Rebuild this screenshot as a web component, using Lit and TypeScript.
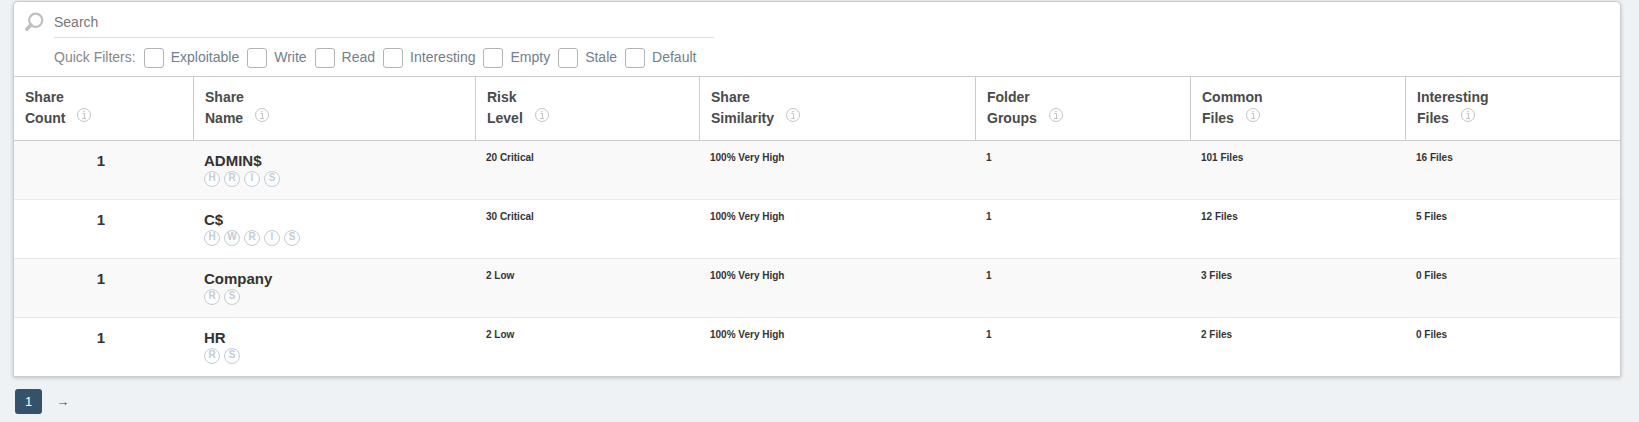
import { LitElement, html, css } from "lit";
import { customElement, property } from "lit/decorators.js";

interface Share {
  count: number;
  name: string;
  flags: string[];
  risk: string;
  similarity: string;
  groups: number;
  common: string;
  interesting: string;
}

const FILTERS = ["Exploitable", "Write", "Read", "Interesting", "Empty", "Stale", "Default"];

const COLUMNS = [
  { first: "Share", last: "Count", weight: 180 },
  { first: "Share", last: "Name", weight: 282 },
  { first: "Risk", last: "Level", weight: 224 },
  { first: "Share", last: "Similarity", weight: 276 },
  { first: "Folder", last: "Groups", weight: 215 },
  { first: "Common", last: "Files", weight: 215 },
  { first: "Interesting", last: "Files", weight: 214 },
];

const TOTAL_WEIGHT = COLUMNS.reduce((sum, column) => sum + column.weight, 0);

const SHARES: Share[] = [
  { count: 1, name: "ADMIN$", flags: ["H", "R", "I", "S"], risk: "20 Critical", similarity: "100% Very High", groups: 1, common: "101 Files", interesting: "16 Files" },
  { count: 1, name: "C$", flags: ["H", "W", "R", "I", "S"], risk: "30 Critical", similarity: "100% Very High", groups: 1, common: "12 Files", interesting: "5 Files" },
  { count: 1, name: "Company", flags: ["R", "S"], risk: "2 Low", similarity: "100% Very High", groups: 1, common: "3 Files", interesting: "0 Files" },
  { count: 1, name: "HR", flags: ["R", "S"], risk: "2 Low", similarity: "100% Very High", groups: 1, common: "2 Files", interesting: "0 Files" },
];

@customElement("share-toolbar")
export class ShareToolbar extends LitElement {
  static styles = css`
    :host {
      display: block;
      padding: 8px 10px;
      font-size: 14px;
    }
    .search {
      display: flex;
      align-items: flex-start;
      gap: 10px;
    }
    .glass {
      flex: none;
      width: 20px;
      height: 20px;
      margin-top: 2px;
    }
    .query {
      box-sizing: border-box;
      width: 660px;
      min-width: 0;
      height: 28px;
      padding: 0 0 3px;
      border: 0;
      border-bottom: 1px solid #dcdcdc;
      outline: 0;
      background: none;
      color: #444;
      font: inherit;
    }
    .query::placeholder {
      color: #777;
      opacity: 1;
    }
    .filters {
      display: flex;
      flex-wrap: wrap;
      align-items: flex-start;
      gap: 8px;
      margin: 10px 0 0 30px;
      color: #888;
      line-height: 18px;
    }
    .filter {
      display: flex;
      align-items: flex-start;
      gap: 7px;
      color: #708090;
      cursor: pointer;
    }
    .tick {
      appearance: none;
      box-sizing: border-box;
      width: 20px;
      height: 20px;
      margin: 0;
      border: 1px solid #b4b4b4;
      border-radius: 3px;
      background: #fff;
    }
    .tick:checked {
      background: #34536a;
    }
  `;

  render() {
    return html`
      <div class="search">
        <svg class="glass" viewBox="0 0 20 20" aria-hidden="true">
          <circle cx="11.7" cy="8.3" r="6.6" fill="none" stroke="#c0c0c0" stroke-width="2.2" />
          <path d="M7 13 L2.8 17.2" fill="none" stroke="#c0c0c0" stroke-width="3.6" stroke-linecap="round" />
        </svg>
        <input class="query" type="text" placeholder="Search" aria-label="Search" />
      </div>
      <div class="filters" role="group" aria-labelledby="filters-title">
        <span id="filters-title">Quick Filters:</span>
        ${FILTERS.map(
          (name) => html`<label class="filter"><input class="tick" type="checkbox" />${name}</label>`
        )}
      </div>
    `;
  }
}

@customElement("share-table")
export class ShareTable extends LitElement {
  @property({ attribute: false }) shares: Share[] = [];

  static styles = css`
    :host {
      display: block;
    }
    .table {
      width: 100%;
      table-layout: fixed;
      border-collapse: separate;
      border-spacing: 0;
    }
    .head {
      padding: 10px 10px 11px 11px;
      border-top: 1px solid #ccc;
      border-bottom: 1px solid #ccc;
      border-right: 1px solid #ccc;
      color: #4a4a4a;
      font-size: 14px;
      font-weight: bold;
      line-height: 21px;
      text-align: left;
      vertical-align: top;
    }
    .head:last-child {
      border-right: 0;
    }
    .caption {
      display: flex;
      gap: 12px;
    }
    .info {
      width: 14px;
      height: 14px;
    }
    .cell {
      height: 38px;
      padding: 10px 16px 10px 10px;
      border-bottom: 1px solid #ebebeb;
      color: #333;
      font-size: 10px;
      font-weight: bold;
      line-height: 14px;
      vertical-align: top;
    }
    .row:nth-child(odd) .cell {
      background: #f9f9f9;
    }
    .row:last-child .cell {
      border-bottom: 0;
    }
    .row .count {
      font-size: 15px;
      line-height: 20px;
      text-align: center;
    }
    .name {
      font-size: 15px;
      line-height: 20px;
    }
    .flags {
      display: flex;
      gap: 4px;
    }
    .flag {
      box-sizing: border-box;
      width: 16px;
      height: 16px;
      border: 1px solid #c5cdd5;
      border-radius: 50%;
      background: #fcfdfd;
      color: #c5cdd5;
      line-height: 12px;
      text-align: center;
    }
  `;

  render() {
    return html`
      <table class="table">
        <colgroup>
          ${COLUMNS.map((column) => html`<col style="width: ${(column.weight / TOTAL_WEIGHT) * 100}%" />`)}
        </colgroup>
        <thead>
          <tr>
            ${COLUMNS.map(
              (column) => html`
                <th class="head" scope="col">
                  ${column.first}
                  <div class="caption">
                    <span>${column.last}</span>
                    <svg class="info" viewBox="0 0 14 14" aria-hidden="true">
                      <circle cx="7" cy="7" r="6.5" fill="#fff" stroke="#c4c4c4" />
                      <path d="M5.5 5.5 H7.5 V10 M5 10.5 H9" fill="none" stroke="#c4c4c4" />
                      <rect x="6.3" y="2.8" width="1.4" height="1.4" fill="#c4c4c4" />
                    </svg>
                  </div>
                </th>
              `
            )}
          </tr>
        </thead>
        <tbody>
          ${this.shares.map(
            (share) => html`
              <tr class="row">
                <td class="cell count">${share.count}</td>
                <td class="cell">
                  <div class="name">${share.name}</div>
                  <div class="flags">${share.flags.map((flag) => html`<span class="flag">${flag}</span>`)}</div>
                </td>
                <td class="cell">${share.risk}</td>
                <td class="cell">${share.similarity}</td>
                <td class="cell">${share.groups}</td>
                <td class="cell">${share.common}</td>
                <td class="cell">${share.interesting}</td>
              </tr>
            `
          )}
        </tbody>
      </table>
    `;
  }
}

@customElement("app-root")
export class AppRoot extends LitElement {
  static styles = css`
    :host {
      display: block;
      box-sizing: border-box;
      min-height: 100vh;
      padding: 1px 18px 7px 13px;
      background: #eef2f5;
      font-family: "Liberation Sans", Arial, sans-serif;
    }
    .card {
      overflow: hidden;
      border: 1px solid #ccc;
      border-radius: 5px 5px 0 0;
      background: #fff;
      box-shadow: 0 1px 4px rgba(0, 0, 0, 0.2);
    }
    .pager {
      display: flex;
      gap: 4px;
      margin: 12px 0 0 2px;
      font-size: 13px;
      line-height: 25px;
    }
    .page {
      padding: 0 10px;
      border-radius: 3px;
      color: #34536a;
      text-decoration: none;
    }
    .current {
      background: #34536a;
      color: #fff;
    }
  `;

  render() {
    return html`
      <main class="card">
        <share-toolbar></share-toolbar>
        <share-table .shares=${SHARES}></share-table>
      </main>
      <nav class="pager" aria-label="Pages">
        <a class="page current" href="#1" aria-current="page">1</a>
        <a class="page" href="#2" aria-label="Next page">→</a>
      </nav>
    `;
  }
}
